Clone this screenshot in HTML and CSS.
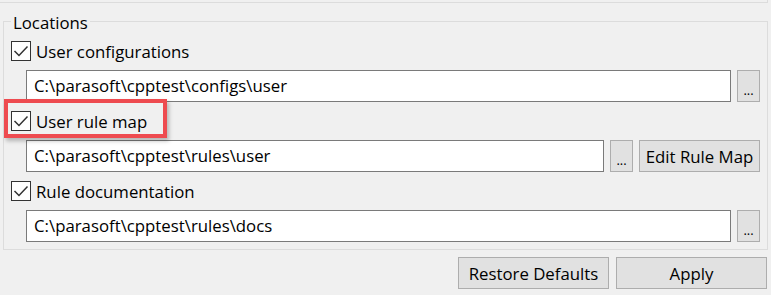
FILE: index.html
```html
<!DOCTYPE html>
<html lang="en">
<head>
    <meta charset="UTF-8">
    <title>Locations</title>
    <link rel="stylesheet" href="styles.css">
</head>
<body>
<div class="prev-group"></div>

<fieldset class="group">
    <legend>Locations</legend>

    <div class="check-row">
        <span class="box"><svg width="20" height="20" viewBox="0 0 20 20"><path d="M3.5 10 L8 14.5 L16.5 5.5" fill="none" stroke="#333" stroke-width="1.5"/></svg></span>
        <span class="label">User configurations</span>
    </div>
    <div class="field-row">
        <div class="field">C:\parasoft\cpptest\configs\user</div>
        <button class="btn dots">...</button>
    </div>

    <div class="check-row">
        <span class="box"><svg width="20" height="20" viewBox="0 0 20 20"><path d="M3.5 10 L8 14.5 L16.5 5.5" fill="none" stroke="#333" stroke-width="1.5"/></svg></span>
        <span class="label">User rule map</span>
        <span class="highlight"></span>
    </div>
    <div class="field-row">
        <div class="field">C:\parasoft\cpptest\rules\user</div>
        <button class="btn dots">...</button>
        <button class="btn edit">Edit Rule Map</button>
    </div>

    <div class="check-row">
        <span class="box"><svg width="20" height="20" viewBox="0 0 20 20"><path d="M3.5 10 L8 14.5 L16.5 5.5" fill="none" stroke="#333" stroke-width="1.5"/></svg></span>
        <span class="label">Rule documentation</span>
    </div>
    <div class="field-row">
        <div class="field">C:\parasoft\cpptest\rules\docs</div>
        <button class="btn dots">...</button>
    </div>
</fieldset>

<div class="actions">
    <button class="btn wide">Restore Defaults</button>
    <button class="btn wide">Apply</button>
</div>
</body>
</html>
```

FILE: styles.css
```css
*{
    margin:0;
    padding:0;
    box-sizing:border-box;
}
body{
    background:#f0f0f0;
    font-family:"Open Sans", "Noto Sans", sans-serif;
    font-size:16.8px;
    color:#000;
    width:771px;
    height:295px;
    overflow:hidden;
}
.prev-group{
    width:768px;
    height:3px;
    border-right:1px solid #dcdcdc;
    border-bottom:1px solid #dcdcdc;
}
.group{
    margin:7px 0 0 3px;
    width:765px;
    border:1px solid #dcdcdc;
    padding:9px 7px 7px 7px;
}
.group legend{
    padding:2px 2px 0;
    height:22px;
    line-height:22px;
}
.check-row{
    position:relative;
    display:flex;
    align-items:center;
    gap:5px;
    height:20px;
}
.box{
    width:20px;
    height:20px;
    border:1px solid #333;
    background:#fff;
    display:flex;
}
.box svg{
    margin:-1px;
}
.label{
    line-height:20px;
    padding-top:1px;
}
.highlight{
    position:absolute;
    left:-7px;
    top:-12px;
    width:163px;
    height:39px;
    border:4px solid #ee4b50;
    box-shadow:2px 3px 4px rgba(0,0,0,0.25);
}
.field-row{
    display:flex;
    gap:6px;
    height:32px;
    margin:9px 0 9px 15px;
}
.field-row:last-child{
    margin-bottom:0;
}
.field{
    flex:1;
    background:#fff;
    border:1px solid #7a7a7a;
    padding-left:7px;
    line-height:30px;
    white-space:nowrap;
}
.btn{
    font:inherit;
    color:#000;
    background:#e1e1e1;
    border:1px solid #adadad;
    height:32px;
}
.dots{
    width:23px;
    font-size:13px;
    line-height:30px;
    padding-top:4px;
}
.edit{
    width:121px;
}
.actions{
    display:flex;
    justify-content:flex-end;
    gap:7px;
    margin:7px 4px 0 0;
}
.wide{
    width:151px;
}
```
